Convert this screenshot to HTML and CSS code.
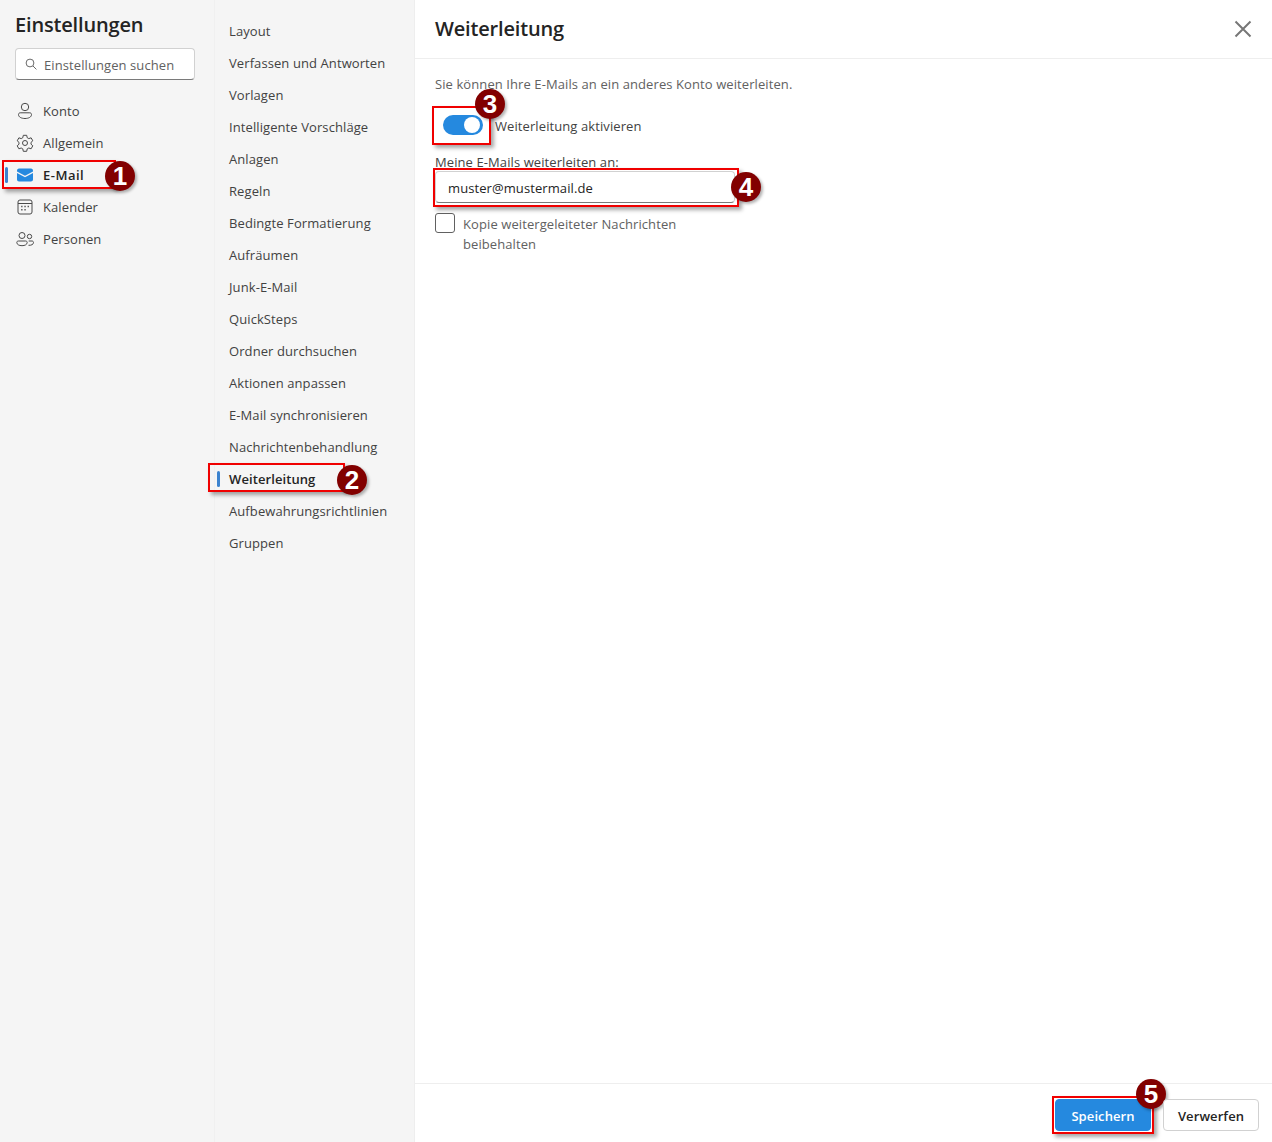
FILE: index.html
```html
<!DOCTYPE html>
<html lang="de">
<head>
<meta charset="utf-8">
<title>Einstellungen</title>
<link rel="stylesheet" href="styles.css">
</head>
<body>
<div class="app">
  <aside class="side">
    <h1 class="side-title">Einstellungen</h1>
    <div class="search">
      <svg class="search-icon" viewBox="0 0 14 14" width="14" height="14"><circle cx="6" cy="6" r="3.9" fill="none" stroke="#6a6a6a"/><path d="M9 9l3.4 3.4" stroke="#6a6a6a" fill="none"/></svg>
      <span class="search-text">Einstellungen suchen</span>
    </div>
    <nav class="side-nav">
      <div class="side-item">
        <svg viewBox="0 0 20 20" width="20" height="20" fill="none" stroke="#4a4a4a"><circle cx="10" cy="6" r="3.7"/><path d="M3.5 13.5c0-1 .8-1.7 1.7-1.7h9.6c.9 0 1.7.7 1.7 1.7 0 2.600-3 4-6.500 4s-6.500-1.400-6.500-4z"/></svg>
        <span>Konto</span>
      </div>
      <div class="side-item">
        <svg viewBox="0 0 20 20" width="20" height="20" fill="none" stroke="#4a4a4a"><circle cx="10" cy="10" r="2.500"/><path d="M8.300 2.300h3.400l.5 2.400 1.600.9 2.300-.8 1.700 3-1.800 1.600v1.800l1.800 1.600-1.700 3-2.300-.8-1.600.9-.5 2.400H8.300l-.5-2.400-1.600-.9-2.300.8-1.700-3 1.800-1.600V9.400L2.200 7.800l1.700-3 2.300.8 1.600-.9z" stroke-linejoin="round"/></svg>
        <span>Allgemein</span>
      </div>
      <div class="side-item is-active">
        <i class="marker"></i>
        <svg viewBox="0 0 20 20" width="20" height="20"><path d="M2 6.500V5.500C2 4.500 2.800 3.500 4 3.500h12c1.200 0 2 1 2 2v1l-8 4.200z" fill="#2589df"/><path d="M2 8v6.500c0 1.100.9 2 2 2h12c1.100 0 2-.9 2-2V8l-8 4.200z" fill="#2589df"/></svg>
        <span class="mail-label">E-Mail</span>
        <b class="note note-mail"></b><b class="badge badge-mail">1</b>
      </div>
      <div class="side-item">
        <svg viewBox="0 0 20 20" width="20" height="20" fill="none" stroke="#4a4a4a"><rect x="3" y="3" width="14" height="14" rx="2"/><path d="M3 6.500h14"/><path d="M6.200 9.500h1.300M9.400 9.500h1.300M12.600 9.500h1.300M6.200 12.800h1.300M9.400 12.800h1.300" stroke-width="1.400"/></svg>
        <span>Kalender</span>
      </div>
      <div class="side-item">
        <svg viewBox="0 0 20 20" width="20" height="20" fill="none" stroke="#4a4a4a"><circle cx="7" cy="6.500" r="3"/><circle cx="14.500" cy="7.500" r="2.200"/><path d="M1.800 13.500c0-.9.700-1.500 1.500-1.500h7.400c.8 0 1.500.6 1.500 1.500 0 2-2.300 3.200-5.200 3.200s-5.200-1.200-5.200-3.200z"/><path d="M13.500 16.300c2.800.2 5-.9 5-2.800 0-.9-.7-1.500-1.500-1.500h-3.300"/></svg>
        <span>Personen</span>
      </div>
    </nav>
  </aside>

  <nav class="sub">
    <div class="sub-item">Layout</div>
    <div class="sub-item">Verfassen und Antworten</div>
    <div class="sub-item">Vorlagen</div>
    <div class="sub-item">Intelligente Vorschläge</div>
    <div class="sub-item">Anlagen</div>
    <div class="sub-item">Regeln</div>
    <div class="sub-item">Bedingte Formatierung</div>
    <div class="sub-item">Aufräumen</div>
    <div class="sub-item">Junk-E-Mail</div>
    <div class="sub-item">QuickSteps</div>
    <div class="sub-item">Ordner durchsuchen</div>
    <div class="sub-item">Aktionen anpassen</div>
    <div class="sub-item">E-Mail synchronisieren</div>
    <div class="sub-item">Nachrichtenbehandlung</div>
    <div class="sub-item is-active">
      <i class="marker marker-sub"></i>Weiterleitung
      <b class="note note-fwd"></b><b class="badge badge-fwd">2</b>
    </div>
    <div class="sub-item">Aufbewahrungsrichtlinien</div>
    <div class="sub-item">Gruppen</div>
  </nav>

  <main class="main">
    <header class="main-head">
      <h2 class="main-title">Weiterleitung</h2>
      <svg class="close" viewBox="0 0 20 20" width="20" height="20"><path d="M2.500 2.500l15 15M17.500 2.500l-15 15" stroke="#777" stroke-width="2" fill="none"/></svg>
    </header>
    <section class="content">
      <p class="intro">Sie können Ihre E-Mails an ein anderes Konto weiterleiten.</p>
      <div class="toggle-row">
        <span class="toggle"><i class="knob"></i>
          <b class="note note-toggle"></b><b class="badge badge-toggle">3</b>
        </span>
        <span class="toggle-label">Weiterleitung aktivieren</span>
      </div>
      <div class="field-label">Meine E-Mails weiterleiten an:</div>
      <div class="input">muster@mustermail.de
        <b class="note note-input"></b><b class="badge badge-input">4</b>
      </div>
      <div class="check-row">
        <span class="check"></span>
        <span class="check-label">Kopie weitergeleiteter Nachrichten<br>beibehalten</span>
      </div>
    </section>
    <footer class="foot">
      <div class="btn btn-primary">Speichern
        <b class="note note-save"></b><b class="badge badge-save">5</b>
      </div>
      <div class="btn">Verwerfen</div>
    </footer>
  </main>
</div>
</body>
</html>
```
FILE: styles.css
```css
* { box-sizing: border-box; }
html, body { margin: 0; height: 100%; background: #fff; }
body { font-family: "Open Sans", "Noto Sans", "Liberation Sans", sans-serif; font-size: 13px; letter-spacing: .09px; color: #424242; overflow: hidden; }
.app { display: grid; grid-template-columns: 214px 200px 1fr; height: 1142px; }

.side { background: #f5f5f5; padding: 12px 0 0; }
.side-title { margin: 0 0 0 15px; font-size: 20px; line-height: 26px; font-weight: 600; color: #242424; letter-spacing: -.17px; }
.search { display: flex; align-items: center; gap: 6px; margin: 10px 19px 0 15px; height: 32px; padding-left: 8px; background: #fff; border: 1px solid #d1d1d1; border-bottom-color: #7a7a7a; border-radius: 4px; color: #616161; }
.search-icon { flex: none; }
.search-text { position: relative; top: 1px; }
.side-nav { margin-top: 15px; }
.side-item { position: relative; display: flex; align-items: center; height: 32px; padding-left: 15px; gap: 8px; }
.side-item svg { flex: none; }
.side-item.is-active { font-weight: 600; color: #242424; }
.mail-label { letter-spacing: .5px; }
.marker { position: absolute; left: 5px; top: 8px; width: 3px; height: 16px; background: #3c83cf; border-radius: 2px; }

.sub { background: #f5f5f5; border-left: 1px solid #f0f0f0; padding-top: 15px; }
.sub-item { position: relative; height: 32px; line-height: 32px; padding-left: 14px; white-space: nowrap; }
.sub-item.is-active { font-weight: 600; color: #242424; }
.marker-sub { left: 2px; }

.main { display: flex; flex-direction: column; background: #fff; border-left: 1px solid #eee; }
.main-head { display: flex; align-items: center; justify-content: space-between; height: 59px; padding: 0 19px 0 20px; border-bottom: 1px solid #eeeeee; }
.main-title { margin: 0 0 2px; font-size: 20px; font-weight: 600; color: #242424; letter-spacing: -.17px; }
.close { flex: none; }
.content { flex: 1; padding: 16px 20px 0; }
.intro { margin: 0; line-height: 18px; color: #616161; }
.toggle-row { display: flex; align-items: center; height: 20px; margin-top: 22px; padding-left: 8px; }
.toggle { position: relative; display: block; flex: none; width: 40px; height: 20px; border-radius: 10px; background: #2589df; }
.knob { position: absolute; right: 3px; top: 2px; width: 16px; height: 16px; border-radius: 50%; background: #fff; }
.toggle-label { position: relative; top: 1px; margin-left: 12px; }
.field-label { margin-top: 18px; line-height: 18px; }
.input { position: relative; width: 300px; height: 32px; line-height: 32px; padding-left: 12px; background: #fff; border: 1px solid #d1d1d1; border-bottom-color: #7a7a7a; border-radius: 4px; color: #242424; }
.check-row { display: flex; gap: 8px; margin-top: 10px; }
.check { flex: none; width: 20px; height: 20px; border: 1px solid #616161; border-radius: 3px; background: #fff; }
.check-label { position: relative; top: 1px; line-height: 20px; color: #616161; }
.foot { display: flex; justify-content: flex-end; align-items: flex-start; gap: 12px; height: 59px; padding: 15px 13px 0 0; border-top: 1px solid #eeeeee; }
.btn { position: relative; width: 96px; height: 32px; line-height: 32px; text-align: center; font-weight: 600; color: #242424; background: #fff; border: 1px solid #d1d1d1; border-radius: 4px; }
.btn-primary { background: #2589df; border-color: #2589df; color: #fff; }

.note { position: absolute; display: block; border: 2px solid #f00000; box-shadow: 3px 3px 4px rgba(0,0,0,.35); }
.badge { position: absolute; display: flex; align-items: center; justify-content: center; width: 30px; height: 30px; border-radius: 50%; background: #820000; color: #fff; font-family: "Liberation Sans", Arial, sans-serif; font-size: 26px; font-weight: 700; letter-spacing: 0; box-shadow: 2px 2px 3px rgba(0,0,0,.3); }

.note-mail { left: 2px; top: 1px; width: 114px; height: 29px; }
.badge-mail { left: 105px; top: 2px; }
.note-fwd { left: -7px; top: 0; width: 137px; height: 29px; }
.badge-fwd { left: 122px; top: 2px; }
.note-toggle { left: -11px; top: -9px; width: 59px; height: 39px; }
.badge-toggle { left: 32px; top: -26px; }
.note-input { left: -3px; top: -4px; width: 306px; height: 39px; }
.badge-input { left: 295px; top: 0; }
.note-save { left: -4px; top: -4px; width: 102px; height: 38px; }
.badge-save { left: 80px; top: -21px; }
```
